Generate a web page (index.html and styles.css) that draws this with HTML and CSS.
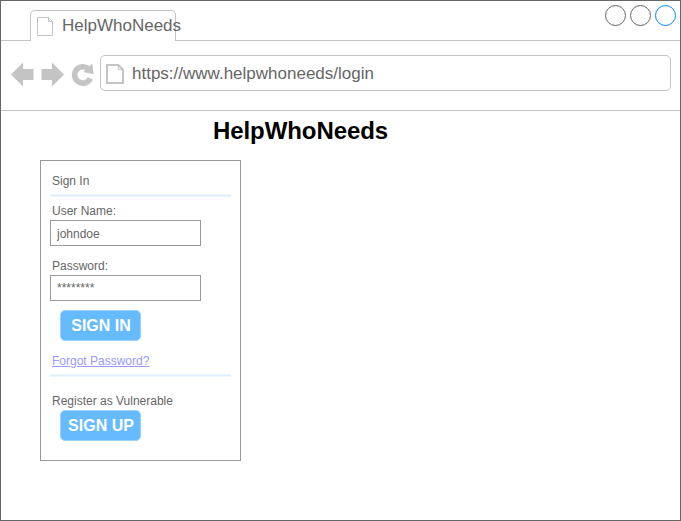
FILE: index.html
```html
<!DOCTYPE html>
<html lang="en">
<head>
<meta charset="utf-8">
<title>HelpWhoNeeds</title>
<link rel="stylesheet" href="styles.css">
</head>
<body>
<div class="window">
  <header class="tabs">
    <div class="tab-lead"></div>
    <div class="tab">
      <svg class="tab-icon" width="17" height="20" viewBox="0 0 17 20"><path d="M.5.5H11.5L15.5 4.5V18.5H.5ZM11.5.5V4.5H15.5"/></svg>
      <span class="tab-title">HelpWhoNeeds</span>
    </div>
    <div class="controls">
      <svg width="72" height="23" viewBox="0 0 72 23"><circle cx="10.5" cy="11.5" r="10"/><circle cx="35.5" cy="11.5" r="10"/><circle class="active" cx="60.5" cy="11.5" r="10"/></svg>
    </div>
  </header>
  <nav class="toolbar">
    <svg class="nav-icons" width="84" height="26" viewBox="0 0 84 26">
      <path d="M0 12.5L12 .5V7H22.5V18H12V24.5Z"/>
      <path d="M53 12.5L41 .5V7H30.5V18H41V24.5Z"/>
      <path class="arc" d="M77.5 7A8.2 8.2 0 1 0 79.3 16.3"/>
      <path d="M81.2 1.5L82.7 12.2L72.5 10Z"/>
    </svg>
    <div class="address">
      <svg class="page-icon" width="19" height="21" viewBox="0 0 19 21"><path class="sheet" d="M1 1H12.3L17 5.7V19H1Z"/><path class="fold" d="M12.3 1V5.7H17"/></svg>
      <span>https://www.helpwhoneeds/login</span>
    </div>
  </nav>
  <main class="page">
    <h1>HelpWhoNeeds</h1>
    <form class="card">
      <div class="heading">Sign In</div>
      <div class="rule"></div>
      <label for="user">User Name:</label>
      <input id="user" type="text" value="johndoe">
      <label class="second" for="pass">Password:</label>
      <input id="pass" type="text" value="********">
      <button class="sign-in" type="button">SIGN IN</button>
      <a href="#">Forgot Password?</a>
      <div class="rule"></div>
      <div class="register">Register as Vulnerable</div>
      <button class="sign-up" type="button">SIGN UP</button>
    </form>
  </main>
</div>
</body>
</html>
```
FILE: styles.css
```css
* { box-sizing: border-box; }
body {
  margin: 0;
  background: #fff;
  color: #666;
  font-family: "Liberation Sans", Arial, sans-serif;
}
svg { display: block; fill: none; }
.window { height: 521px; border: 1px solid #666; overflow: hidden; }

.tabs { display: flex; height: 40px; }
.tab-lead { width: 29px; border-bottom: 1px solid #c4c4c4; }
.tab {
  display: flex;
  width: 146px;
  margin-top: 9px;
  padding-left: 6px;
  border: 1px solid #c4c4c4;
  border-bottom: 0;
  border-radius: 5px 5px 0 0;
  white-space: nowrap;
}
.tab-icon { flex: none; margin-top: 6px; stroke: #c4c4c4; }
.tab-title { margin-left: 8px; font-size: 17px; line-height: 30px; }
.controls {
  display: flex;
  flex: 1;
  justify-content: flex-end;
  padding: 3px 3px 0 0;
  border-bottom: 1px solid #c4c4c4;
}
.controls circle { stroke: #666; }
.controls .active { stroke: #08f; }

.toolbar {
  display: flex;
  height: 70px;
  padding: 14px 9px 0 10px;
  border-bottom: 1px solid #c4c4c4;
}
.nav-icons { flex: none; margin-top: 7px; fill: #c4c4c4; }
.nav-icons .arc { fill: none; stroke: #c4c4c4; stroke-width: 5.6; }
.address {
  display: flex;
  flex: 1;
  height: 36px;
  margin-left: 5px;
  padding-left: 5px;
  border: 1px solid #c4c4c4;
  border-radius: 5px;
  font-size: 17px;
  line-height: 36px;
}
.page-icon { margin: 8px 7px 0 0; stroke: #c4c4c4; }
.sheet { stroke-width: 2; }

h1 {
  margin: 0 0 0 212px;
  color: #000;
  font-size: 24px;
  letter-spacing: -0.08px;
  line-height: 40px;
  height: 49px;
}
.card {
  display: flex;
  flex-direction: column;
  align-items: flex-start;
  width: 201px;
  height: 301px;
  margin-left: 39px;
  padding: 10px 9px 0;
  border: 1px solid #999;
  font-size: 12px;
  line-height: 20px;
}
.heading, label, a, .register { margin-left: 2px; }
.rule {
  width: 181px;
  height: 3px;
  margin: 3px 0 4px;
  border: solid #eef6ff;
  border-width: 1px 0;
  background: #ddeeff;
}
input {
  width: 151px;
  height: 26px;
  margin: -1px 0 0;
  padding: 1px 6px 0;
  border: 1px solid #999;
  color: #666;
  font: 12px "Liberation Sans", Arial, sans-serif;
}
#pass { padding-top: 0; }
.second { margin-top: 10px; }
button {
  width: 81px;
  height: 31px;
  margin-left: 10px;
  padding: 0 0 0 1px;
  border: 1px solid #99d1ff;
  border-radius: 5px;
  background: #66bbff;
  color: #fff;
  font: bold 16px "Liberation Sans", Arial, sans-serif;
}
.sign-in { margin-top: 9px; margin-bottom: 10px; }
.sign-up { margin-top: -1px; }
a { color: #9999ff; text-decoration: underline; }
.register { margin-top: 10px; }
```
